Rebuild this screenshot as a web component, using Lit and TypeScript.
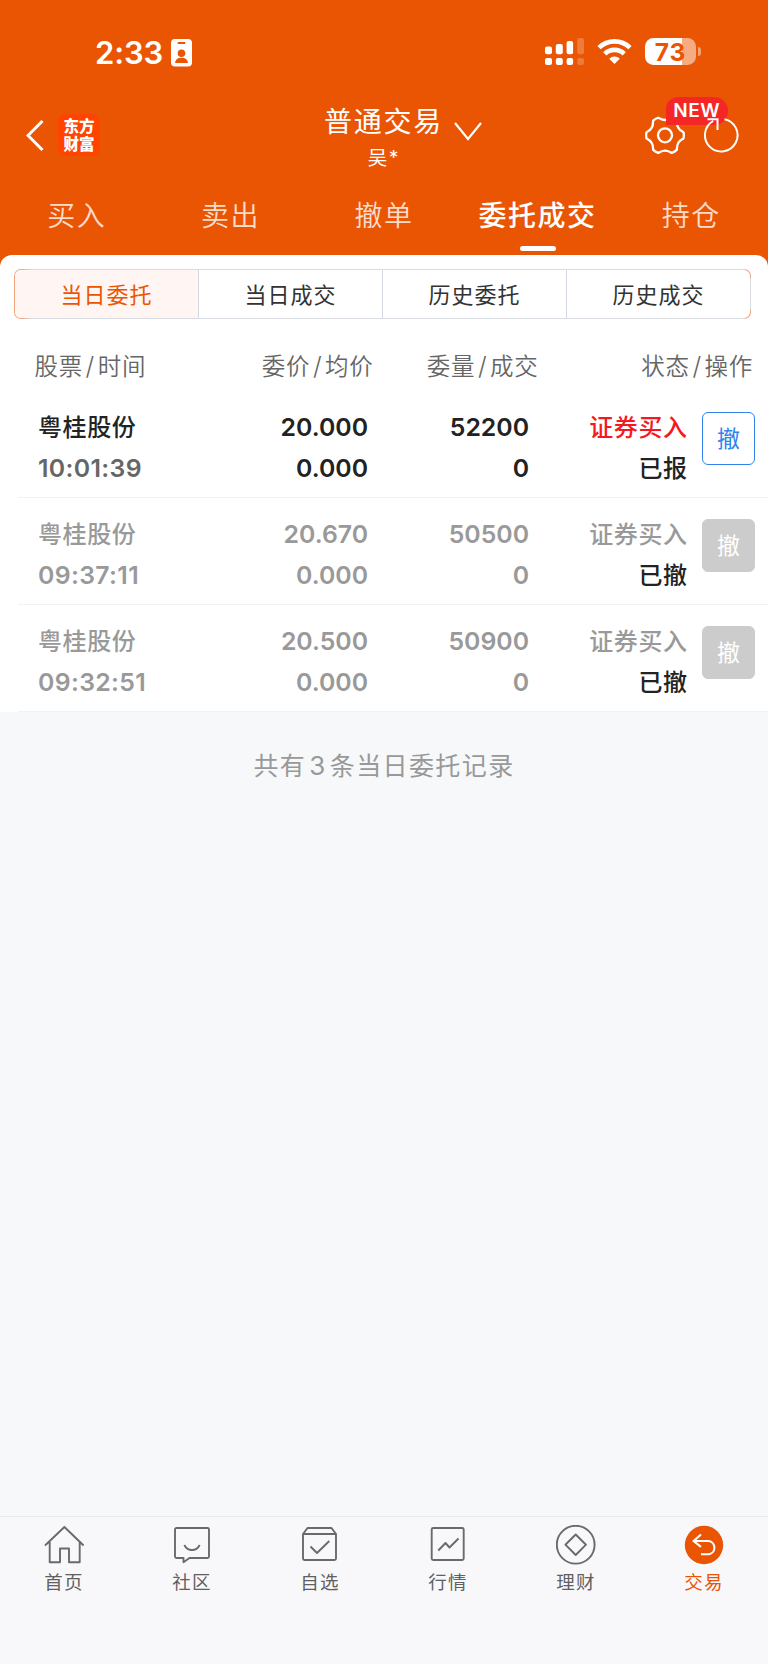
import { LitElement, html, css, svg } from "lit";
import { customElement, property } from "lit/decorators.js";
import { classMap } from "lit/directives/class-map.js";

interface Order {
  name: string;
  time: string;
  price: string;
  avg: string;
  qty: string;
  filled: string;
  side: string;
  status: string;
  active: boolean;
}

const ORDERS: Order[] = [
  { name: "粤桂股份", time: "10:01:39", price: "20.000", avg: "0.000", qty: "52200", filled: "0", side: "证券买入", status: "已报", active: true },
  { name: "粤桂股份", time: "09:37:11", price: "20.670", avg: "0.000", qty: "50500", filled: "0", side: "证券买入", status: "已撤", active: false },
  { name: "粤桂股份", time: "09:32:51", price: "20.500", avg: "0.000", qty: "50900", filled: "0", side: "证券买入", status: "已撤", active: false },
];

const TABS = ["买入", "卖出", "撤单", "委托成交", "持仓"];
const SEGMENTS = ["当日委托", "当日成交", "历史委托", "历史成交"];

const NAV = [
  { label: "首页", icon: svg`<path d="M1 20.5 20.4 2 39.6 20.5M5.7 17V37.3H16V23.5H25V37.3H35.7V17"/>` },
  { label: "社区", icon: svg`<path d="M4.500 3H35.500a1.500 1.500 0 0 1 1.500 1.500V31.500a1.500 1.500 0 0 1-1.500 1.500H17.500L11.500 37.300V33H4.500A1.500 1.500 0 0 1 3 31.500V4.500A1.500 1.500 0 0 1 4.500 3ZM12.300 20Q15 25 20 25T27.700 20"/>` },
  { label: "自选", icon: svg`<path d="M7.500 3H31.500L36 9V33.500a1.500 1.500 0 0 1-1.500 1.500H4.500A1.500 1.500 0 0 1 3 33.500V9ZM3.500 9H35.500M10.500 21.500 17 28 29.300 16"/>` },
  { label: "行情", icon: svg`<rect x="3.700" y="3" width="32" height="32" rx="1.500"/><path d="M10.300 25.500 17.500 18 21.500 22.500 30.500 13.500"/>` },
  { label: "理财", icon: svg`<circle cx="19.700" cy="19.700" r="18.900"/><path d="M19.700 9.500 30 19.700 19.700 30 9.400 19.700Z"/>` },
  { label: "交易", icon: svg`<circle class="disc" cx="20" cy="20" r="19.200"/><path class="arrow" d="M17 9.500 9.500 16 17 21.800M9.500 16H24.500a6.700 6.700 0 0 1 0 13.300H17"/>` },
];

// Six-toothed gear outline: short rounded teeth joined by shallow concave arcs.
function gearPath(cx: number, cy: number): string {
  const at = (deg: number, r: number) => {
    const a = (deg * Math.PI) / 180;
    return `${(cx + r * Math.cos(a)).toFixed(2)} ${(cy + r * Math.sin(a)).toFixed(2)}`;
  };
  let d = `M${at(-9, 18.800)}`;
  for (let a = 0; a < 360; a += 60) {
    d += `Q${at(a, 19.200)} ${at(a + 9, 18.800)}L${at(a + 13, 17.600)}Q${at(a + 30, 13.800)} ${at(a + 47, 17.600)}L${at(a + 51, 18.800)}`;
  }
  return d + "Z";
}

@customElement("status-bar")
export class StatusBar extends LitElement {
  static styles = css`
    :host { display: flex; height: 100px; padding: 0 67px 0 95px; box-sizing: border-box; justify-content: space-between; }
    .left { display: flex; padding-top: 33px; gap: 8px; }
    .time { font-size: 31px; font-weight: 600; line-height: 40px; letter-spacing: -0.1px; }
    .badge { margin-top: 6px; }
    .right { display: flex; padding-top: 37px; }
    .signal { margin-right: 12px; }
    .wifi { margin-right: 13px; }
    .battery { display: flex; align-items: center; height: 29px; gap: 2px; }
    .cell { width: 51px; height: 27px; border-radius: 8.5px; background: linear-gradient(90deg, #fff 37px, #f6ab82 37px);
      color: #ea5504; font-size: 24.500px; font-weight: 650; line-height: 28px; text-align: center; letter-spacing: .8px; }
    .cap { width: 3px; height: 9px; border-radius: 0 4px 4px 0; background: #f3a177; }
    svg { display: block; }
  `;
  render() {
    return html`
      <div class="left">
        <span class="time">2:33</span>
        <svg class="badge" width="21" height="28" viewBox="0 0 21 28">
          <rect width="21" height="27.500" rx="4" fill="#fff"/>
          <rect x="6.500" y="3" width="8" height="2" rx="1" fill="#ea5504"/>
          <circle cx="10.500" cy="14.200" r="3.800" fill="#ea5504"/>
          <path d="M4 24q.600-5.300 6.500-5.300T17 24Z" fill="#ea5504"/>
        </svg>
      </div>
      <div class="right">
        <svg class="signal" width="40" height="29" viewBox="0 0 40 29" fill="#fff">
          <rect x="0" y="9.500" width="7" height="7.700" rx="2"/><rect x="10.800" y="7" width="7" height="10.200" rx="2"/>
          <rect x="21.600" y="4" width="6.500" height="13.200" rx="2"/><rect x="32.200" y="1" width="6.800" height="16.200" rx="2" opacity=".22"/>
          <rect x="0" y="21" width="7" height="7" rx="2"/><rect x="10.800" y="21" width="7" height="7" rx="2"/>
          <rect x="21.600" y="21" width="6.500" height="7" rx="2"/><rect x="32.200" y="21" width="6.800" height="7" rx="2" opacity=".22"/>
        </svg>
        <svg class="wifi" width="35" height="29" viewBox="0 0 35 29" fill="none" stroke="#fff" stroke-width="4.600">
          <path d="M2 10.600a22.300 22.300 0 0 1 31 0"/><path d="M7.800 16.900a13.800 13.800 0 0 1 19.400 0"/>
          <path d="M12.200 21.800a7.500 7.500 0 0 1 10.600 0L17.500 27Z" fill="#fff" stroke="none"/>
        </svg>
        <div class="battery"><div class="cell">73</div><div class="cap"></div></div>
      </div>`;
  }
}

@customElement("title-bar")
export class TitleBar extends LitElement {
  static styles = css`
    :host { display: grid; grid-template-columns: 1fr auto 1fr; height: 84px; }
    .left { display: flex; align-items: flex-start; padding: 14px 0 0 26px; gap: 14px; }
    .back { margin-top: 6px; }
    .logo { width: 42px; height: 42px; border-radius: 8px; background: #ff4300; font: 900 15.500px/17.500px "Noto Sans CJK SC", sans-serif;
      text-align: center; box-sizing: border-box; padding-top: 3px; }
    .mid { display: flex; flex-direction: column; align-items: center; }
    .name { display: flex; gap: 11px; font-size: 28px; letter-spacing: 1.7px; line-height: 36px; padding: 4px 0 0 38px; }
    .chev { margin-top: 17px; }
    .user { font-size: 19.500px; line-height: 26px; margin-top: 4px; letter-spacing: 1.500px; }
    .right { display: flex; justify-content: flex-end; padding: 14px 28px 0 0; position: relative; gap: 17px; }
    .new { position: absolute; right: 40px; top: -3px; width: 62.500px; height: 28px; border-radius: 12px 14px 14px 0; background: #f52626;
      font-size: 19px; font-weight: 600; line-height: 28px; text-align: center; letter-spacing: .5px; }
    .reload { position: relative; }
    svg { display: block; }
  `;
  render() {
    return html`
      <div class="left">
        <svg class="back" width="18" height="31" viewBox="0 0 18 31" fill="none" stroke="#fff" stroke-width="3"><path d="M16.500 1 2 15.500 16.500 30"/></svg>
        <div class="logo">东方<br>财富</div>
      </div>
      <div class="mid">
        <div class="name">普通交易
          <svg class="chev" width="28" height="20" viewBox="0 0 28 20" fill="none" stroke="#fff" stroke-width="2.200"><path d="M1 2 14 18 27 2"/></svg>
        </div>
        <div class="user">吴*</div>
      </div>
      <div class="right">
        <svg width="42" height="42" viewBox="0 0 42 42" fill="none" stroke="#fff" stroke-width="2.300" stroke-linejoin="round">
          <path d=${gearPath(21, 21.3)}/>
          <circle cx="21" cy="21.300" r="7"/>
        </svg>
        <div class="new">NEW</div>
        <svg class="reload" width="37" height="42" viewBox="0 0 37 42" fill="none" stroke="#fff" stroke-width="2">
          <path d="M21.500 5.200A16.300 16.300 0 1 1 10.200 7M4.500 5.200H14.500V16"/>
        </svg>
      </div>`;
  }
}

@customElement("trade-tabs")
export class TradeTabs extends LitElement {
  static styles = css`
    :host { display: grid; grid-template-columns: repeat(5, 1fr); height: 71px; }
    .tab { display: flex; flex-direction: column; align-items: center; justify-content: space-between; padding: 12px 0 4px;
      font-size: 28px; line-height: 40px; letter-spacing: 1.500px; font-weight: 350; color: #fbdccb; box-sizing: border-box; white-space: nowrap; }
    .tab.on { color: #fff; font-weight: 550; }
    .bar { width: 36px; height: 5.500px; border-radius: 3px; background: #fff; }
  `;
  render() {
    return TABS.map((t, i) => html`<div class=${classMap({ tab: true, on: i === 3 })}>${t}${i === 3 ? html`<i class="bar"></i>` : null}</div>`);
  }
}

@customElement("order-row")
export class OrderRow extends LitElement {
  @property({ attribute: false }) order!: Order;
  static styles = css`
    :host { display: block; padding-left: 18px; }
    .row { display: grid; grid-template-columns: 155px 175px 161px 158px 68px; height: 107px; padding: 15.5px 0 0 20px; border-bottom: 1px solid #f3f3f5;
      box-sizing: border-box; font-size: 24px; font-weight: 500; line-height: 41px; color: #999; }
    .num, .state { text-align: right; }
    .num, .time { font-size: 24.800px; font-weight: 570; }
    .time { letter-spacing: .35px; }
    .cjk { letter-spacing: .6px; }
    .state .cjk { margin-right: -.6px; }
    .done { color: #222; }
    .live .txt, .live .num { color: #222; }
    .live .time { color: #666; }
    .live .side { color: #f5191f; }
    .btn { width: 53px; height: 53px; margin: 5px 0 0 15px; border-radius: 6px; border: 1px solid #ccc; background: #ccc; color: #fff; box-sizing: border-box;
      font-size: 23px; line-height: 53px; text-align: center; font-weight: 400; }
    .live .btn { background: #fff; border-color: #2f83ea; color: #2f83ea; }
  `;
  render() {
    const o = this.order;
    return html`<div class=${classMap({ row: true, live: o.active })}>
      <div><div class="cjk txt">${o.name}</div><div class="time">${o.time}</div></div>
      <div class="num"><div>${o.price}</div><div>${o.avg}</div></div>
      <div class="num"><div>${o.qty}</div><div>${o.filled}</div></div>
      <div class="state"><div class="cjk side">${o.side}</div><div class="cjk done">${o.status}</div></div>
      <div class="btn">撤</div>
    </div>`;
  }
}

@customElement("bottom-nav")
export class BottomNav extends LitElement {
  static styles = css`
    :host { display: grid; grid-template-columns: repeat(6, 1fr); height: 149px; border-top: 1px solid #ebebed; border-bottom: 1px solid #fff;
      background: #f8f8fb; box-sizing: border-box; padding-top: 8px; }
    .item { display: flex; flex-direction: column; align-items: center; color: #606060; font-size: 18.500px; line-height: 26px; letter-spacing: 1.200px; }
    .item.on { color: #ea5504; }
    svg { display: block; margin-bottom: 4px; fill: none; stroke: #6a6a6a; stroke-width: 1.900; stroke-linejoin: round; }
    .disc { fill: #ea5504; stroke: none; }
    .arrow { stroke: #fff; stroke-width: 2.1; }
  `;
  render() {
    return NAV.map((n, i) => html`<div class=${classMap({ item: true, on: i === 5 })}>
      <svg width="40" height="40" viewBox="0 0 40 40">${n.icon}</svg>${n.label}</div>`);
  }
}

@customElement("app-root")
export class AppRoot extends LitElement {
  static styles = css`
    :host { display: flex; flex-direction: column; height: 1665px; background: #f7f8fa; font-family: Inter, "Noto Sans CJK SC", sans-serif; }
    .top { background: #ea5504; color: #fff; height: 266px; }
    .panel { background: #fff; border-radius: 12px 12px 0 0; margin-top: -11px; }
    .segs { display: grid; grid-template-columns: 183px 184px 184px 1fr; margin: 0 17px 0 14px; height: 50px; border: 1px solid transparent; border-radius: 7px; box-sizing: border-box; overflow: hidden;
      background: linear-gradient(#fff, #fff) padding-box,
        linear-gradient(transparent 8px, #d9dce2 10px, #d9dce2 40px, transparent 42px) right / 2px 100% no-repeat border-box,
        linear-gradient(90deg, #f0a27a 6px, #d9dce2 18px, #d9dce2 calc(100% - 8px), #f0a27a calc(100% - 4px)) border-box; }
    .segwrap { padding-top: 14px; }
    .seg { font-size: 22px; line-height: 50px; letter-spacing: 1px; text-align: center; color: #333; border-left: 1px solid #d4d8e0; }
    .seg.on { background: #fff5f2; color: #ea5504; border-left: 0; }
    .head { display: grid; grid-template-columns: 155px 184px 165px 214.5px; padding-left: 34.5px; height: 72px; font-size: 23.500px; line-height: 94px;
      letter-spacing: .8px; color: #666; font-weight: 350; }
    .head span + span { text-align: right; }
    .sl { padding: 0 2.500px; font-size: 25px; font-style: normal; }
    .foot { flex: 1; text-align: center; color: #999; font-size: 25px; letter-spacing: 1.400px; line-height: 40px; padding-top: 34px; }
    .n { padding: 0 3px; font-size: 26px; }
  `;
  private pair(a: string, b: string) {
    return html`<span>${a}<i class="sl">/</i>${b}</span>`;
  }
  render() {
    return html`
      <div class="top"><status-bar></status-bar><title-bar></title-bar><trade-tabs></trade-tabs></div>
      <div class="panel">
        <div class="segwrap"><div class="segs">${SEGMENTS.map((s, i) => html`<div class=${classMap({ seg: true, on: i === 0 })}>${s}</div>`)}</div></div>
        <div class="head">${this.pair("股票", "时间")}${this.pair("委价", "均价")}${this.pair("委量", "成交")}${this.pair("状态", "操作")}</div>
        ${ORDERS.map((o) => html`<order-row .order=${o}></order-row>`)}
      </div>
      <div class="foot">共有<span class="n">3</span>条当日委托记录</div>
      <bottom-nav></bottom-nav>`;
  }
}
